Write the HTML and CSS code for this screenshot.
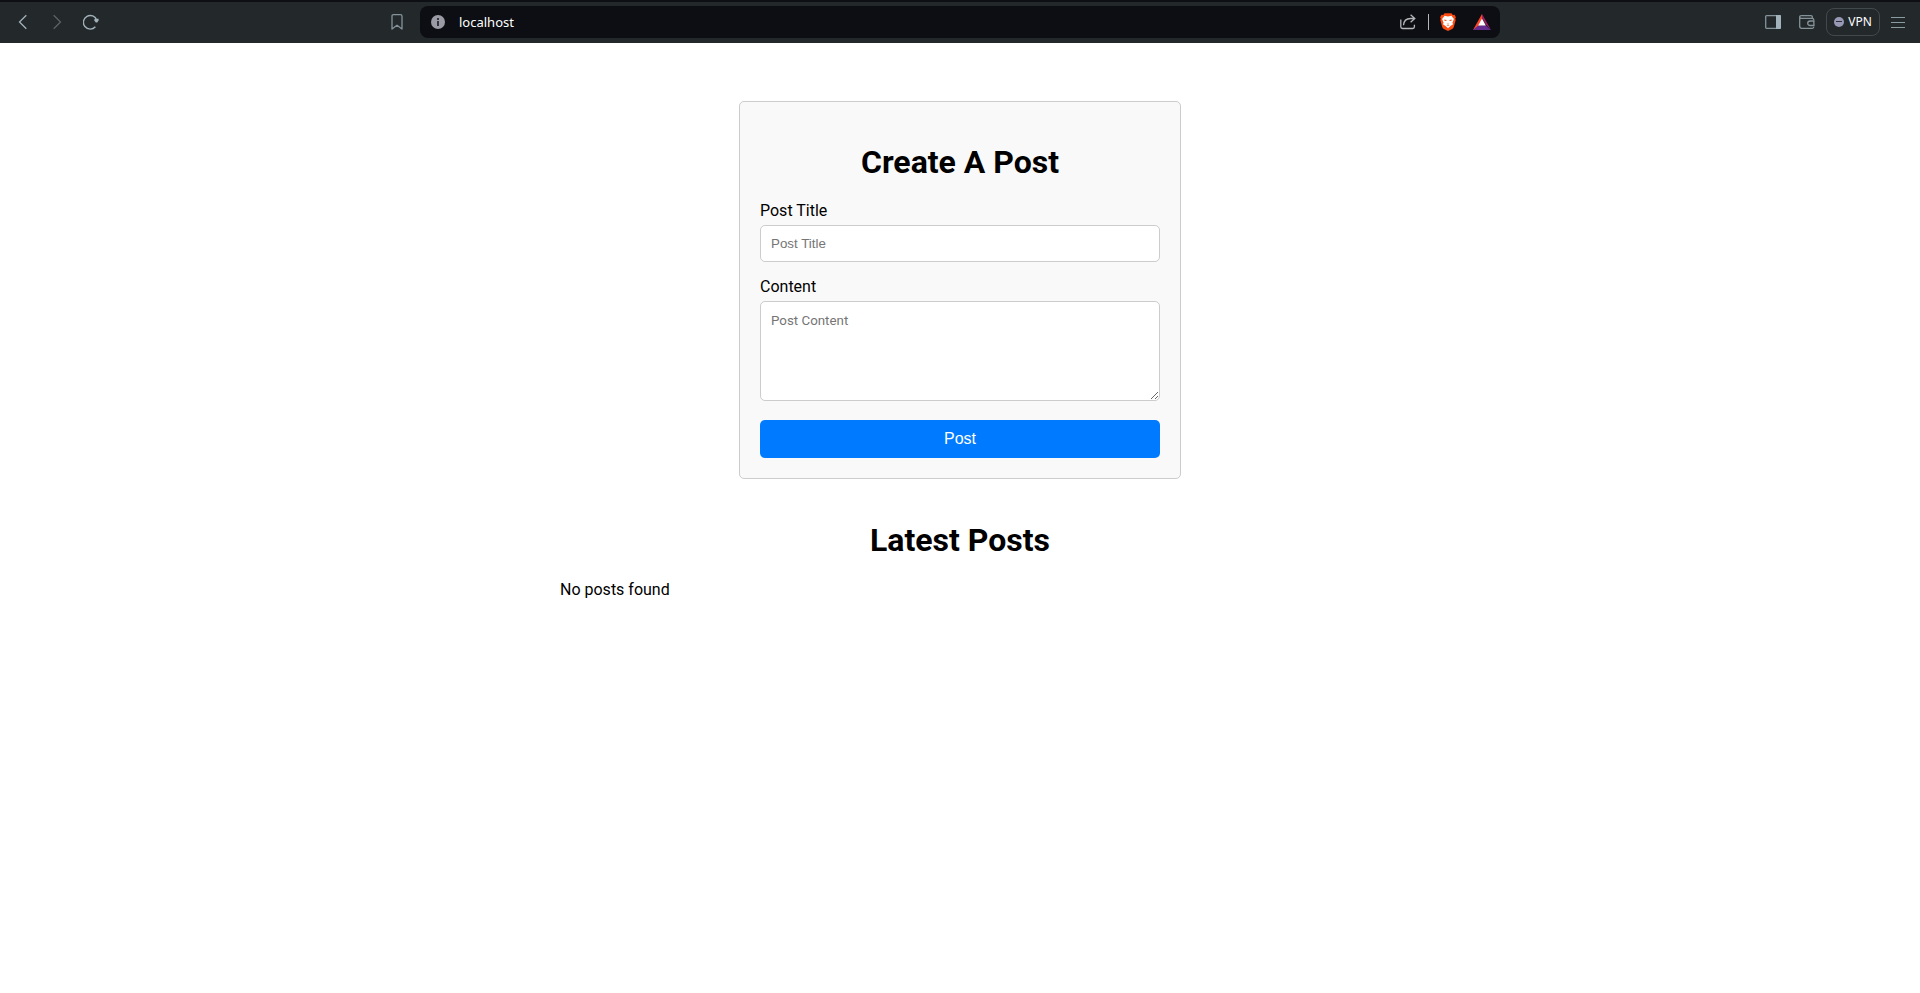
FILE: index.html
```html
<!DOCTYPE html>
<html lang="en">
<head>
<meta charset="utf-8">
<title>Posts</title>
<link rel="stylesheet" href="styles.css">
</head>
<body>
<header class="toolbar">
  <nav class="tools tools-start" aria-label="Navigation">
    <button class="tool" type="button" aria-label="Back"><svg width="16" height="16" viewBox="0 0 16 16"><path d="M11.3 1.2 4.5 8l6.8 6.8" stroke="#a1b2ba" stroke-width="1.3"/></svg></button>
    <button class="tool" type="button" aria-label="Forward"><svg width="16" height="16" viewBox="0 0 16 16"><path d="M4.7 1.2 11.5 8l-6.8 6.8" stroke="#5b6367" stroke-width="1.3"/></svg></button>
    <button class="tool" type="button" aria-label="Reload"><svg width="16" height="16" viewBox="0 0 16 16"><path d="M13.7 6.2A6.8 6.8 0 1 0 12.4 12.7" stroke="#a1b2ba" stroke-width="1.4"/><path d="M11.6 4.8h4v1.6l-1.4 2.2h-1.4l-1.6-2.2z" fill="#a1b2ba"/></svg></button>
    <button class="tool bookmark" type="button" aria-label="Bookmark"><svg width="16" height="16" viewBox="0 0 16 16"><path d="M3 15V2.2Q3 .7 4.5.7h7Q13 .7 13 2.2V15l-5-3.8z" stroke="#84939a" stroke-width="1.3" stroke-linejoin="round"/></svg></button>
  </nav>
  <div class="address">
    <svg width="14" height="14" viewBox="0 0 14 14"><circle cx="7" cy="7" r="7" fill="#9a9ba5"/><path d="M6 3h2v2H6zM6 6h2v5H6z" fill="#33343c"/></svg>
    <input class="url" type="text" value="localhost" aria-label="Address">
    <button class="tool" type="button" aria-label="Share"><svg width="16" height="16" viewBox="0 0 16 16"><path d="M.8 5.5v7.3q0 1.7 1.7 1.7h10.2q1.7 0 1.7-1.7v-2M3.5 11.2Q4 4.5 10.5 4.5h4.2M10.6.8l4.2 3.7-4.2 3.8" stroke="#b5b6b9" stroke-width="1.3"/></svg></button>
    <span class="divider"></span>
    <button class="tool" type="button" aria-label="Shields"><svg width="16" height="18" viewBox="0 0 16 18"><path d="M4.6.2h6.8l1.5 1.7 1.6-.1 1.4 2.5-.7 1.5.5 1.3-2 7.1-1.1 1.5L8 18l-4.6-2.3-1.1-1.5-2-7.1.5-1.3-.7-1.5 1.4-2.5 1.6.1z" fill="#fb4b12"/><path d="M4.6 2.8 8 3.4l3.4-.6 2.5 3.3-1.5 3.6.7 1.6-2.6 1.7L8 15.2 5.5 13l-2.6-1.7.7-1.6-1.5-3.6z" fill="#fff"/><path d="m4 6.6 2.6.5-.2 1-1.6-.2zM12 6.6l-2.6.5.2 1 1.6-.2zM6.6 10l1.4.9 1.4-.9-.9 1.6h-1zM6.4 12.3h3.2L8 13.2z" fill="#fb5b25"/></svg></button>
    <button class="tool" type="button" aria-label="Rewards"><svg width="18" height="16" viewBox="0 0 18 16"><path d="M9 0 0 16l9-5z" fill="#ff4724"/><path d="M9 0l9 16-5-5.2L9 4z" fill="#9e1f63"/><path d="M0 16h18l-5.5-4.8h-7z" fill="#662d91"/><path d="M9 4.6 5.2 11.4h7.6z" fill="#fff"/></svg></button>
  </div>
  <div class="tools tools-end">
    <button class="tool" type="button" aria-label="Sidebar"><svg width="16" height="16" viewBox="0 0 16 16"><rect x=".7" y="1.7" width="14.6" height="12.6" rx=".8" stroke="#84939a" stroke-width="1.3"/><path d="M11 1h4q1 0 1 1v12q0 1-1 1h-4z" fill="#a1b2ba"/></svg></button>
    <button class="tool" type="button" aria-label="Wallet"><svg width="16" height="16" viewBox="0 0 16 16"><path d="M13.3 4V3q0-1.3-1.3-1.3H2.2Q.7 1.7.7 3v9.3q0 2 2 2h10.6q1.5 0 1.5-1.5M.7 3q0 1.4 1.5 1.4h11q1.6 0 1.6 1.6M15.3 7h-4q-2.6.2-2.6 2.2 0 2.1 2.6 2.3h4" stroke="#84939a" stroke-width="1.3"/><path d="M14.2 6.4h1.3v5.7h-1.3z" fill="#84939a"/></svg></button>
    <button class="vpn" type="button"><svg width="10" height="10" viewBox="0 0 10 10"><circle cx="5" cy="5" r="5" fill="#9798b4"/><path d="M2 4.5h6" stroke="#2b2f3c"/></svg>VPN</button>
    <button class="tool" type="button" aria-label="Menu"><svg width="14" height="12" viewBox="0 0 14 12"><path d="M0 1.5h14M0 6.5h14M0 11.5h14" stroke="#8b9ba2"/></svg></button>
  </div>
</header>
<main class="page">
  <form class="card">
    <h1 class="heading">Create A Post</h1>
    <label class="label" for="title">Post Title</label>
    <input class="field" id="title" type="text" placeholder="Post Title">
    <label class="label" for="content">Content</label>
    <textarea class="field area" id="content" placeholder="Post Content"></textarea>
    <button class="submit" type="submit">Post</button>
  </form>
  <section class="posts">
    <h1 class="heading">Latest Posts</h1>
    <p class="empty">No posts found</p>
  </section>
</main>
</body>
</html>
```
FILE: styles.css
```css
* {
  box-sizing: border-box;
}

body {
  margin: 0;
  background: #fff;
  color: #000;
  font: 16px/19px Roboto, sans-serif;
}

svg {
  display: block;
  flex: none;
  fill: none;
}

.toolbar {
  display: grid;
  grid-template-columns: 1fr minmax(0, 1080px) 1fr;
  align-items: center;
  padding: 4px 0 5px;
  border-top: 2px solid #0e0f14;
  background: #23282b;
}

.tools {
  display: flex;
  align-items: center;
}

.tools-start {
  padding: 0 6px;
}

.tools-end {
  justify-content: flex-end;
  padding-right: 5px;
}

.tool {
  display: flex;
  justify-content: center;
  align-items: center;
  width: 34px;
  height: 28px;
  padding: 0;
  border: 0;
  background: none;
}

.bookmark {
  margin-left: auto;
}

.address {
  display: flex;
  align-items: center;
  height: 32px;
  padding: 0 1px 0 11px;
  border-radius: 8px;
  background: #0d0e13;
}

.url {
  flex: 1;
  min-width: 0;
  padding: 0 0 0 14px;
  border: 0;
  outline: 0;
  background: none;
  color: #fff;
  font: 13px/20px "Noto Sans", sans-serif;
}

.divider {
  width: 1px;
  height: 16px;
  margin: 0 2px 0 3px;
  background: #b5b6b9;
}

.vpn {
  display: flex;
  justify-content: center;
  align-items: center;
  gap: 4px;
  width: 54px;
  height: 28px;
  margin: 0 1px 0 2px;
  padding: 0;
  border: 1px solid #42494d;
  border-radius: 8px;
  background: none;
  color: #fff;
  font: 12px/16px "Noto Sans", sans-serif;
}

.page {
  max-width: 800px;
  margin: 0 auto;
  padding-top: 58px;
}

.card {
  max-width: 442px;
  margin: 0 auto;
  padding: 20px;
  border: 1px solid #ccc;
  border-radius: 5px;
  background: #f9f9f9;
}

.heading {
  margin: 0;
  padding: 22px 0 20px;
  font-size: 32px;
  line-height: 37px;
  text-align: center;
}

.label {
  display: block;
  margin-bottom: 5px;
}

.field {
  display: block;
  width: 100%;
  margin: 0 0 15px;
  padding: 10px;
  border: 1px solid #ccc;
  border-radius: 5px;
  background: #fff;
  font-family: "Liberation Sans", Arial, sans-serif;
}

.area {
  height: 100px;
  margin-bottom: 19px;
  padding-top: 11px;
  font-family: Roboto, sans-serif;
}

.submit {
  display: block;
  width: 100%;
  padding: 10px;
  border: 0;
  border-radius: 5px;
  background: #007bff;
  color: #fff;
  font: 16px/18px "Liberation Sans", Arial, sans-serif;
}

.posts {
  padding-top: 21px;
}

.empty {
  margin: 0;
  line-height: 21px;
}
```
